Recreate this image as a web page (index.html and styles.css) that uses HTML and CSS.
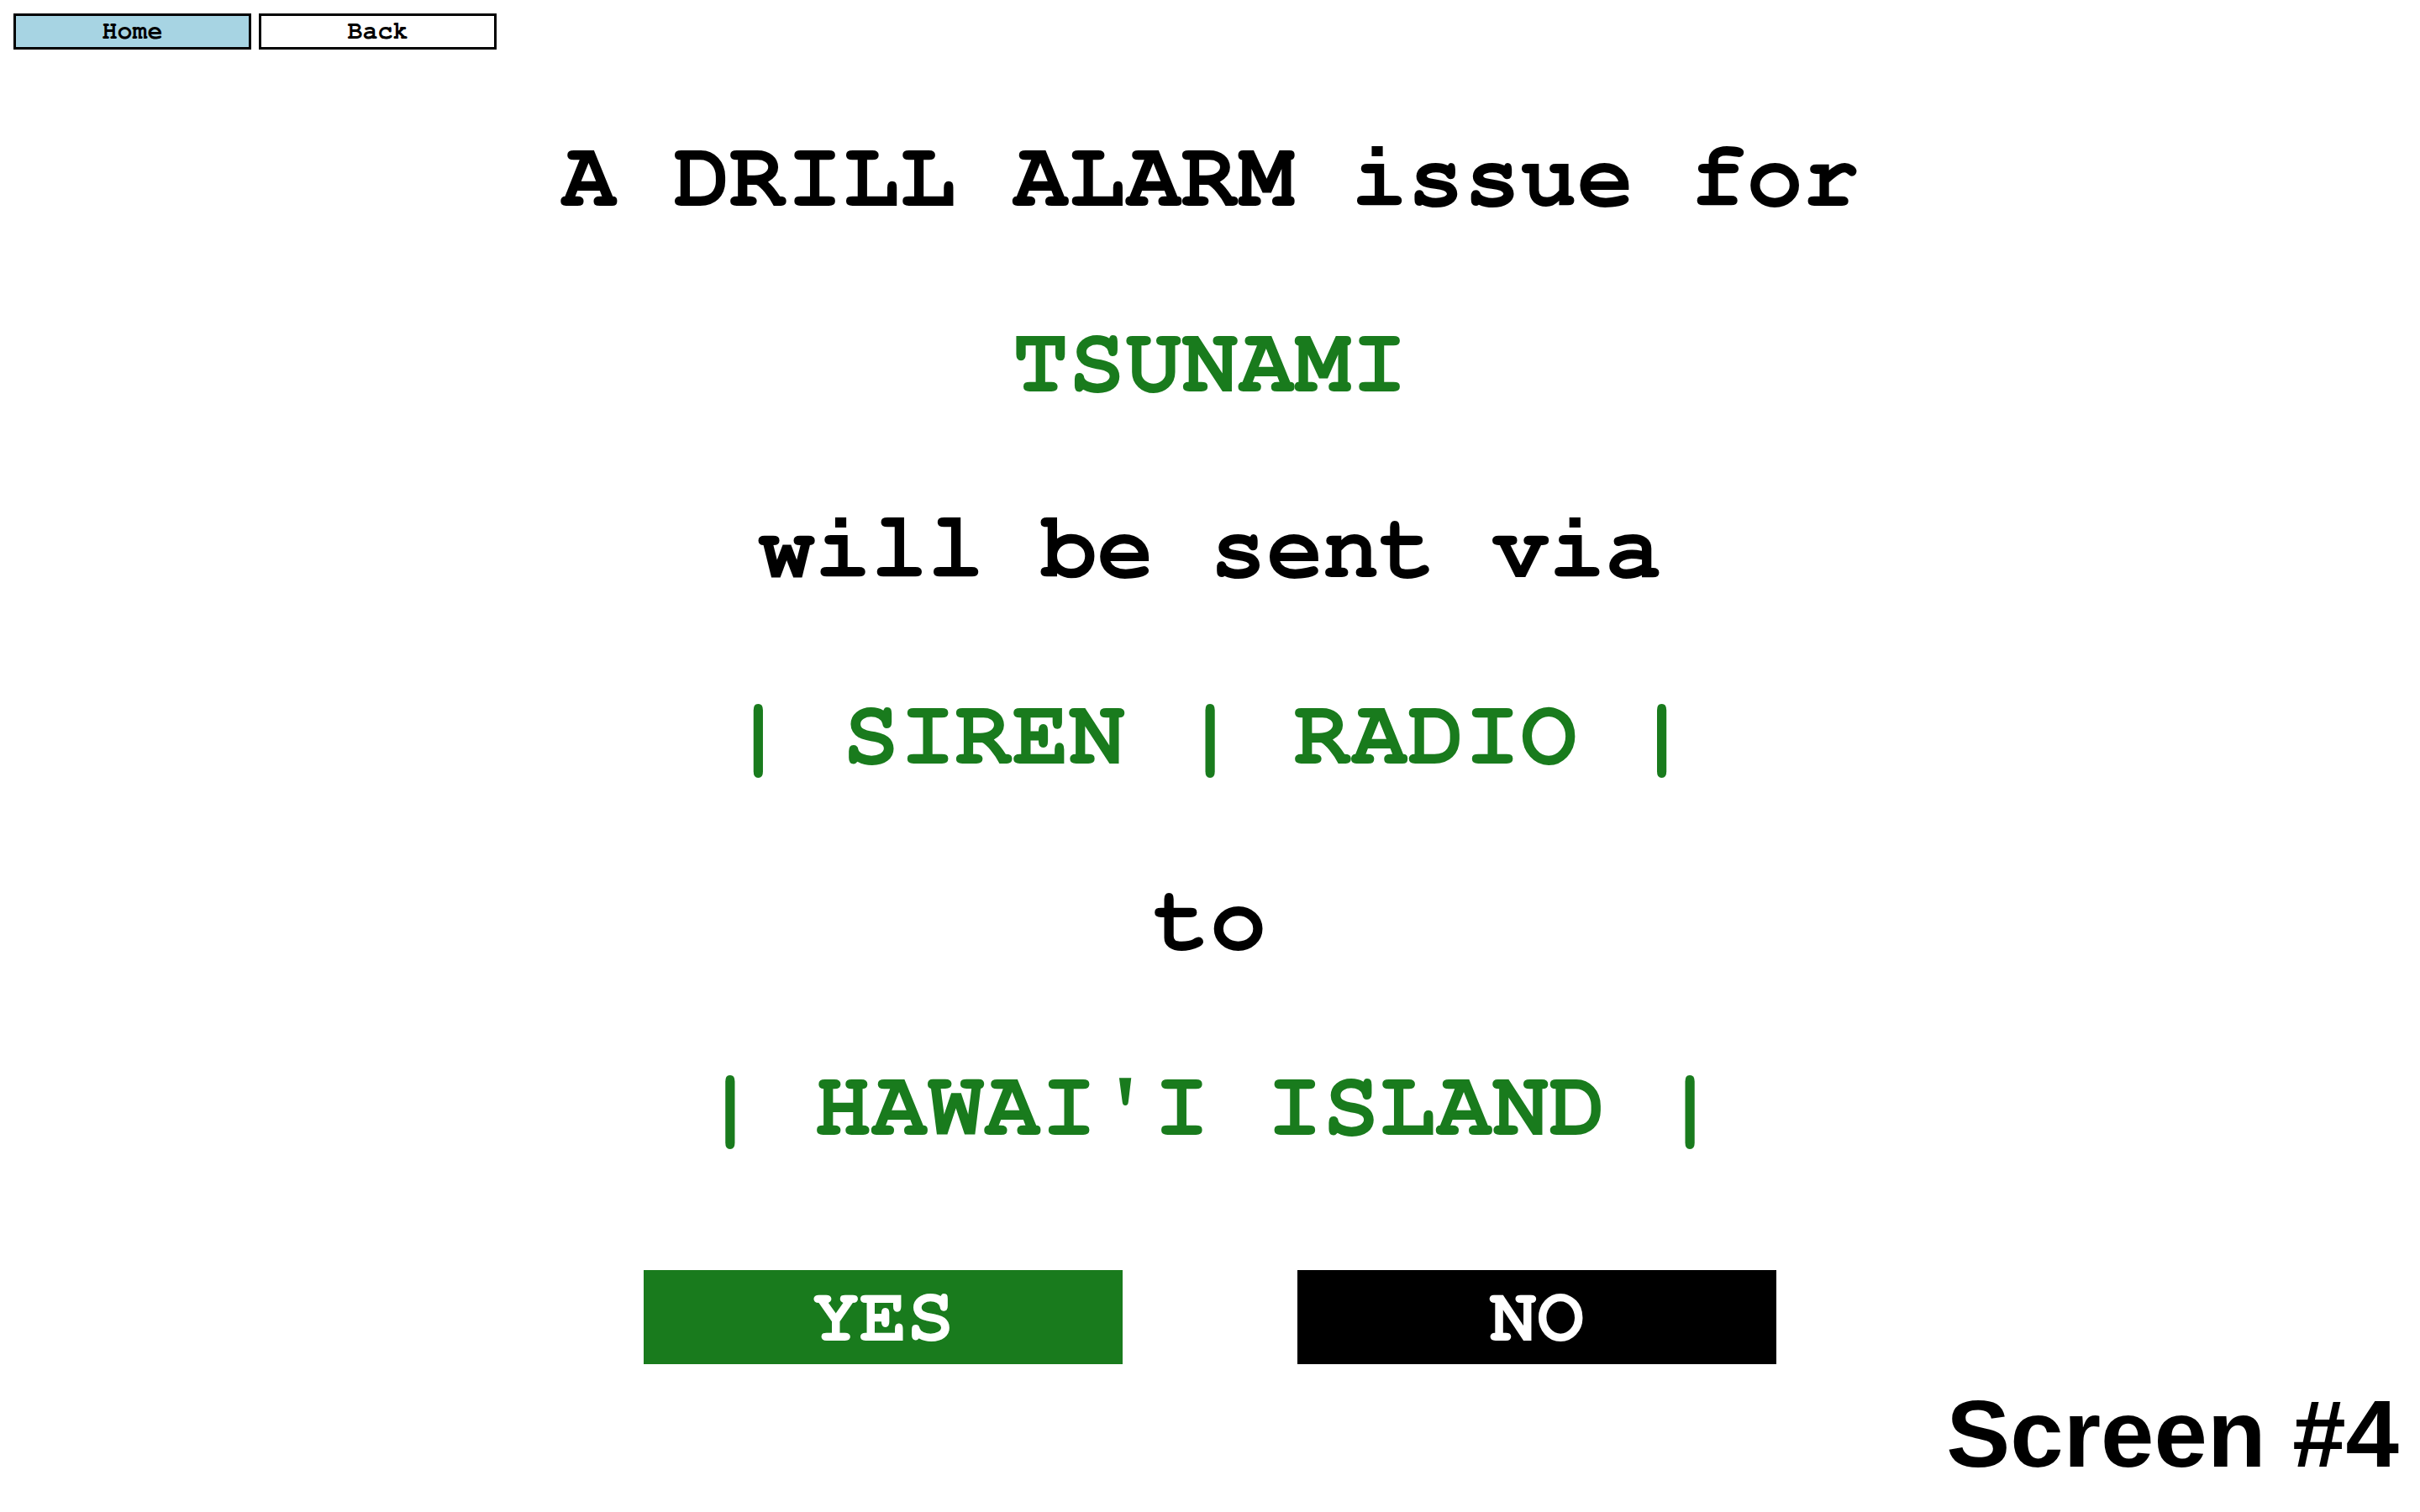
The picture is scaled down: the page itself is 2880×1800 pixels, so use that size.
FILE: index.html
```html
<!DOCTYPE html>
<html>
<head>
<meta charset="utf-8">
<link rel="stylesheet" href="styles.css">
</head>
<body>
<div class="page">
  <div class="topbar">
    <button class="nav-btn home">Home</button>
    <button class="nav-btn back">Back</button>
  </div>
  <div class="message">
    <div class="line">A DRILL ALARM issue for</div>
    <div class="line green">TSUNAMI</div>
    <div class="line">will be sent via</div>
    <div class="line green">| SIREN | RADIO |</div>
    <div class="line">to</div>
    <div class="line green">| HAWAI'I ISLAND |</div>
  </div>
  <div class="actions">
    <button class="action yes">YES</button>
    <button class="action no">NO</button>
  </div>
  <div class="footer">Screen #4</div>
</div>
</body>
</html>
```

FILE: styles.css
```css
html, body {
  margin: 0;
  padding: 0;
  background: #ffffff;
}

.page {
  width: 2880px;
  height: 1800px;
  display: flex;
  flex-direction: column;
  overflow: hidden;
}

.topbar {
  display: flex;
  gap: 9px;
  padding: 16px 0 0 16px;
}

.nav-btn {
  box-sizing: border-box;
  width: 283px;
  height: 43px;
  border: 3px solid #000;
  margin: 0;
  padding: 0;
  font-family: "Nimbus Mono PS", "Nimbus Mono L", "FreeMono", "Courier 10 Pitch", "Liberation Mono", monospace;
  font-weight: 900;
  font-size: 30px;
  color: #000;
  line-height: 37px;
}

.home {
  background: #a7d4e3;
}

.back {
  background: #ffffff;
}

.message {
  margin-top: 42px;
  text-align: center;
  font-family: "Nimbus Mono PS", "Nimbus Mono L", "FreeMono", "Courier 10 Pitch", "Liberation Mono", monospace;
  font-weight: bold;
  font-size: 112px;
  line-height: 221.2px;
  color: #000;
}

.line {
  white-space: pre;
}

.green {
  color: #197b1d;
}

.actions {
  margin-top: 84px;
  display: flex;
  justify-content: center;
  gap: 208px;
}

.action {
  width: 570px;
  height: 112px;
  border: none;
  margin: 0;
  padding: 0;
  color: #fff;
  font-family: "Nimbus Mono PS", "Nimbus Mono L", "FreeMono", "Courier 10 Pitch", "Liberation Mono", monospace;
  font-weight: bold;
  font-size: 94px;
  line-height: 112px;
}

.yes {
  background: #197b1d;
}

.no {
  background: #000;
}

.footer {
  margin-top: 17px;
  text-align: right;
  padding-right: 25px;
  font-family: "Liberation Sans", Arial, sans-serif;
  font-weight: bold;
  font-size: 114px;
  color: #000;
}
```
